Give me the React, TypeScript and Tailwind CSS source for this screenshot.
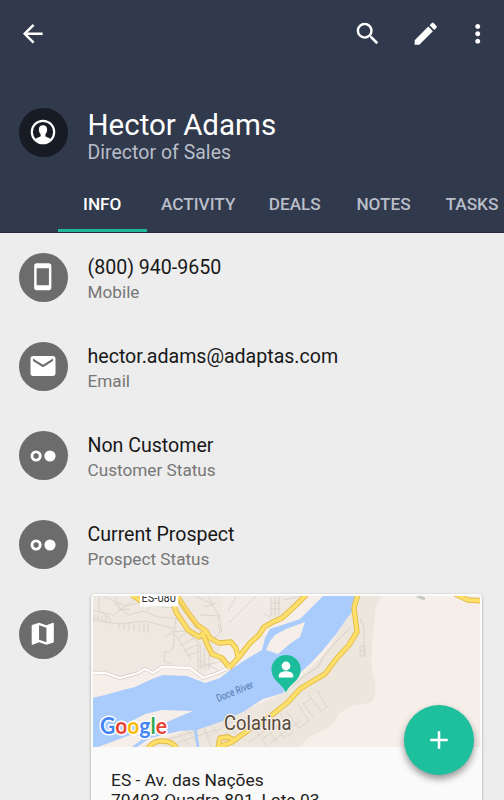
import type { ReactNode } from "react";
import {
  MdAdd,
  MdArrowBack,
  MdEdit,
  MdEmail,
  MdMap,
  MdMoreVert,
  MdSearch,
  MdStayCurrentPortrait,
} from "react-icons/md";

const tabs = [
  { label: "INFO", width: "w-[88.500px]" },
  { label: "ACTIVITY", width: "w-[103.5px]" },
  { label: "DEALS", width: "w-[89.500px]" },
  { label: "NOTES", width: "w-[88px]" },
  { label: "TASKS", width: "w-[89px]" },
];

function AvatarIcon() {
  return (
    <svg viewBox="0 0 26 26" className="size-[26px]">
      <circle cx="13" cy="13" r="11.200" fill="none" stroke="#fff" strokeWidth="2.2" />
      <path
        d="M13 6.2c2.8 0 4.1 1.6 4.1 4.2 0 2-.6 3.7-1.7 4.6v2.3c0 .7 4.2 1.300 5.500 3.200C19 22.700 16.200 24 13 24s-6-1.300-7.900-3.500c1.300-1.900 5.500-2.500 5.500-3.200V15c-1.100-.9-1.700-2.600-1.700-4.600 0-2.600 1.300-4.200 4.100-4.200z"
        fill="#fff"
      />
    </svg>
  );
}

function StatusIcon() {
  return (
    <svg viewBox="0 0 26 12" className="h-3 w-[26px]">
      <circle cx="6.100" cy="6" r="4.100" fill="none" stroke="#fff" strokeWidth="2.900" />
      <circle cx="20" cy="6" r="5.600" fill="#fff" />
    </svg>
  );
}

function Row({ icon, title, label }: { icon: ReactNode; title: string; label: string }) {
  return (
    <div className="flex h-[89.3px] items-start pl-[18.500px]">
      <div className="flex size-[49px] shrink-0 items-center justify-center rounded-full bg-[#6c6c6c] text-white">
        {icon}
      </div>
      <div className="ml-5 pt-[2px]">
        <div className="text-[19.600px] leading-[26px] tracking-[-0.020px] text-[#181818]">{title}</div>
        <div className="text-[17.200px] leading-[22.500px] text-[#777]">{label}</div>
      </div>
    </div>
  );
}

const highways = [
  "M132 595L141 601L168 601L174 605L176 612L188 630L199 637L206 631",
  "M177 596L186 610L197 625L206 631L210 638L219 643L231 642L236 648L238 657",
  "M203 634L208 646L212 654L222 658L229 667",
  "M229 668L239 657L250 643L259 635L264 627L273 622L282 618L295 606L307 594",
  "M358 594L354 608L357 632L349 645L337 658L325 674L313 681L300 689L288 702L272 715L250 729L232 742L219 747",
  "M234 740L228 737L220 738L218 748",
  "M148 749Q152 741 162 741Q173 741 177 749",
  "M455 594L468 600L483 601",
];

function CityMap() {
  return (
    <svg viewBox="93 596 387 151" className="block h-[151px] w-[387px]" fontFamily="Roboto, sans-serif">
      <rect x="92" y="596" width="388" height="151" fill="#f6eee8" />
      <path d="M92 596H245L212 666L203 676L190 667L162 666L153 672L145 668L120 677L105 672L92 673Z" fill="#eee8e0" />
      <path d="M221 596H306L262 632L231 650L222 625Z" fill="#f2ebe5" />
      <path d="M267 596H306L282 617L265 625L273 606Z" fill="#eee8e0" />
      <path d="M360 596H382Q374 606 375 618Q370 652 372 672Q378 688 374 698Q373 702 369 703L350 706L339 714Q332 728 317 733Q306 737 300 747H140L190 729L240 713L285 692L325 654Z" fill="#ede6dd" />

      {/* side streets */}
      <g fill="none" stroke="#d9d3cc" strokeWidth="0.900">
        <path d="M92 610L113 615L134 600M99 596V611L109 617M113 602L128 615L143 611L158 617L181 619M92 619L119 624L146 621L175 629M115 597L120 610L130 609M147 611L151 606L175 608M103 596L125 606L156 599" />
        <path d="M94 614V621M98 615V622M102 615V623M106 616V624M110 618V625M119 623V629M124 623V630M129 622V630M134 624V631M139 624V631M144 623V632M148 624V633" />
        <path d="M176 619L174 633L186 651L191 660M170 632L186 631L198 642V671M164 637Q176 628 174 642T165 651L164 661L171 664M178 639L190 630M180 646L194 638M183 651L197 645M187 656L200 651M200 643L201 669M204 648L205 669M209 655V670M198 660L218 670M198 667L223 661" />
        <path d="M195 596Q214 602 218 614L222 632M204 607L216 603M200 615L221 616M208 596L214 608M229 623L256 596M236 597L228 611M218 624Q224 636 212 638M271 598V616M275 597V617M279 597V616M271 603H280M271 609H280M285 600L300 596M263 613L270 617" />
        <path d="M317 690L327 707L321 711L308 694M311 699L303 704L314 718M298 704L309 721L299 728L286 711M280 713L293 732L284 738L271 720M264 724L277 742M255 730L267 746M262 739L290 719M270 743L300 721M213 727L227 742M222 720L236 734M235 717L252 731M207 737L236 719M216 742L245 718M239 739L257 721M249 743L273 724" />
        <path d="M188 731L199 746M179 734L190 746M169 739L197 731M177 743L215 730M204 728L211 746M360 618L364 628V656M360 646H365V656H360ZM360 651H365" />
        <path d="M417 596L425 599" stroke="#c9c9c5" strokeWidth="3" />
      </g>

      {/* river */}
      <path
        d="M92 698L105 695L123 690L135 687L152 679L163 675L187 676L205 683L220 678L233 668L250 657L262 650L265 638L270 629L285 624L300 619L323 596H355L352 612L347 618L337 633L323 650L311 663L300 673L288 686L283 693L263 699L243 712L220 722L197 730L180 731L150 738L137 747H92Z"
        fill="#aaccfc"
      />
      <path d="M275 635L286 629L305 622L300 637L291 643L278 654L266 650L270 641Z" fill="#f6eee8" />
      <path d="M128 723L145 714L162 710L193 711L169 721L150 731L137 735L145 737L132 747H98L125 737L150 728Z" fill="#f6eee8" />
      <path d="M195 727L198 747" stroke="#aaccfc" strokeWidth="3" />
      <path d="M92 673L105 673L120 678L138 673L145 669L153 673L162 667L190 668L203 678L220 672L232 666" fill="none" stroke="#d2cac3" strokeWidth="3.600" />
      <path d="M92 673L105 673L120 678L138 673L145 669L153 673L162 667L190 668L203 678L220 672L232 666" fill="none" stroke="#fffdfb" strokeWidth="2.300" />
      <path d="M350 628L338 640L323 657L318 667L304 676L292 687" fill="none" stroke="#d5cec7" strokeWidth="1" />

      <g fill="none" strokeLinejoin="round">
        {highways.map((d) => (
          <path key={d} d={d} stroke="#e5b944" strokeWidth="5.400" />
        ))}
        {highways.map((d) => (
          <path key={d} d={d} stroke="#fde06b" strokeWidth="3.600" />
        ))}
      </g>
      <path d="M178 599L188 614L199 629" fill="none" stroke="#e5b944" strokeWidth="0.900" />

      <rect x="140" y="590" width="38" height="16.500" fill="#fff" />
      <text x="141.500" y="602" fontSize="12" fill="#333" textLength="34.500" lengthAdjust="spacingAndGlyphs">
        ES-080
      </text>
      <text x="218" y="702" fontSize="10.500" fill="#4d74a8" textLength="39" lengthAdjust="spacingAndGlyphs" transform="rotate(-22 218 702)">
        Doce River
      </text>
      <text x="224" y="730" fontSize="19.500" fill="#554b3d" stroke="#f6eee8" strokeWidth="2.500" paintOrder="stroke" textLength="67.500" lengthAdjust="spacingAndGlyphs">
        Colatina
      </text>
      <text
        x="100"
        y="733.500"
        fontFamily="Lato, sans-serif"
        fontSize="22.500"
        fontWeight="700"
        textLength="67"
        lengthAdjust="spacingAndGlyphs"
        stroke="#fff"
        strokeWidth="3"
        strokeLinejoin="round"
        paintOrder="stroke"
      >
        <tspan fill="#4285f4">G</tspan>
        <tspan fill="#ea4335">o</tspan>
        <tspan fill="#fbbc05">o</tspan>
        <tspan fill="#4285f4">g</tspan>
        <tspan fill="#34a853">l</tspan>
        <tspan fill="#ea4335">e</tspan>
      </text>

      {/* contact pin */}
      <path d="M286 693C284 685 271.500 681 271.500 669.500A14.600 14.600 0 0 1 300.700 669.500C300.700 681 288 685 286 693Z" fill="#1cbd9a" />
      <circle cx="286" cy="666" r="4.400" fill="#fff" />
      <path d="M278.800 677.500V675.300C278.800 672.500 283 671.200 286 671.200S293.200 672.500 293.200 675.300V677.500Z" fill="#fff" />
    </svg>
  );
}

export default function App() {
  return (
    <div className="relative flex h-[800px] w-[504px] flex-col overflow-hidden bg-[#ededed] font-['Roboto',sans-serif]">
      <header className="flex h-[233px] shrink-0 flex-col overflow-hidden border-b border-[#252c3b] bg-[#31394c] text-white">
        <div className="flex h-[68px] shrink-0 items-center pl-[18px] pr-3">
          <MdArrowBack className="size-[29.500px]" />
          <div className="ml-auto flex items-center">
            <MdSearch className="size-[29.500px]" />
            <MdEdit className="ml-[29px] size-[29.500px]" />
            <MdMoreVert className="ml-[22px] size-[29.500px]" />
          </div>
        </div>
        <div className="flex h-[107px] shrink-0 items-start pl-[18.500px] pt-[39.500px]">
          <div className="flex size-[49px] shrink-0 items-center justify-center rounded-full bg-[#171c24]">
            <AvatarIcon />
          </div>
          <div className="ml-5 -mt-px">
            <div className="text-[29.500px] leading-[36px]">Hector Adams</div>
            <div className="text-[19.400px] leading-[20px] tracking-[0.060px] text-[#b9bec8]">Director of Sales</div>
          </div>
        </div>
        <nav className="flex h-[57px] shrink-0 pl-[58px] text-[17.200px] font-medium">
          {tabs.map((tab, i) => (
            <div
              key={tab.label}
              className={`flex h-full shrink-0 items-center justify-center border-b-[3px] pt-[5px] ${tab.width} ${
                i === 0 ? "border-[#20b898] text-white" : "border-transparent text-[#b9bec8]"
              }`}
            >
              {tab.label}
            </div>
          ))}
        </nav>
      </header>

      <main className="flex flex-col pt-[19.500px]">
        <Row icon={<MdStayCurrentPortrait className="size-[29.500px]" />} title="(800) 940-9650" label="Mobile" />
        <Row icon={<MdEmail className="size-[30px]" />} title="hector.adams@adaptas.com" label="Email" />
        <Row icon={<StatusIcon />} title="Non Customer" label="Customer Status" />
        <Row icon={<StatusIcon />} title="Current Prospect" label="Prospect Status" />
        <div className="flex items-start pl-[18.500px]">
          <div className="flex size-[49px] shrink-0 items-center justify-center rounded-full bg-[#6c6c6c] text-white">
            <MdMap className="size-[29.500px]" />
          </div>
          <section className="-mt-[15.700px] ml-[23.500px] h-[220px] w-[391px] rounded-sm bg-[#fafafa] px-[2px] pt-[2px] shadow-[0_1px_3px_rgba(0,0,0,0.35)]">
            <CityMap />
            <div className="pl-[18px] pt-[23px] text-[17.400px] leading-[20px] text-[#222]">
              <div>ES - Av. das Nações</div>
              <div>70403 Quadra 801, Lote 03</div>
            </div>
          </section>
        </div>
      </main>

      <button className="absolute left-[404.400px] top-[705.300px] flex size-[70px] items-center justify-center rounded-full bg-[#1dbf9d] text-white shadow-[0_4px_7px_rgba(0,0,0,0.4)]">
        <MdAdd className="size-[30px]" />
      </button>
    </div>
  );
}
